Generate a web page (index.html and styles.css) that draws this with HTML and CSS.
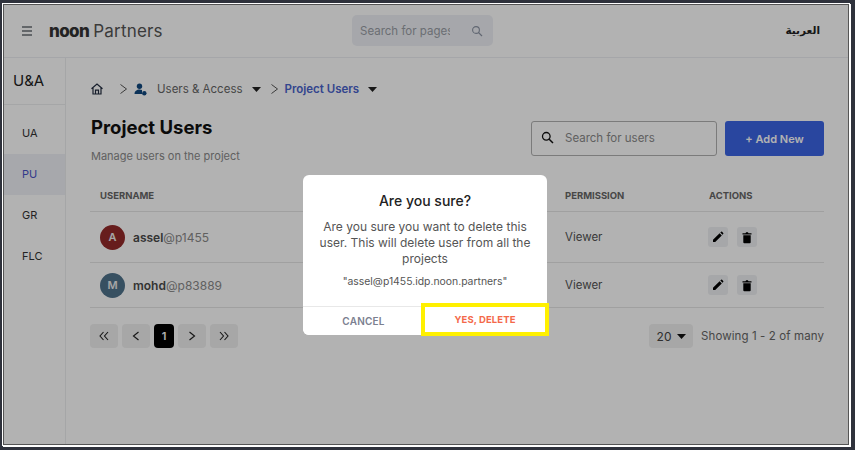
FILE: index.html
```html
<!DOCTYPE html>
<html lang="en">
<head>
<meta charset="utf-8">
<title>Project Users</title>
<link rel="stylesheet" href="styles.css">
</head>
<body>
<div class="frame">
  <header class="topbar">
    <svg class="menu" width="12" height="10" viewBox="0 0 12 10"><path d="M1 1h10M1 5h10M1 9h10" stroke="#6b6f75" stroke-width="1.3" fill="none"/></svg>
    <div class="brand"><b>noon</b> Partners</div>
    <div class="pagesearch"><span class="pagesearch-text">Search for pages</span>
      <svg width="12" height="12" viewBox="0 0 12 12"><circle cx="5" cy="5" r="3.4" stroke="#8b93a3" stroke-width="1.1" fill="none"/><path d="M7.6 7.6 11 11" stroke="#8b93a3" stroke-width="1.2"/></svg>
    </div>
    <div class="lang" lang="ar">العربية</div>
  </header>
  <div class="body">
    <aside class="side">
      <div class="side-title">U&amp;A</div>
      <nav class="side-nav">
        <a class="side-item">UA</a>
        <a class="side-item active">PU</a>
        <a class="side-item">GR</a>
        <a class="side-item">FLC</a>
      </nav>
    </aside>
    <main class="main">
      <div class="crumbs">
        <svg class="home" width="14" height="14" viewBox="0 0 14 14"><path d="M1.500 6.800 7 2l5.500 4.800M3 5.800V12h8V5.800M5.500 12V8.200h3V12" stroke="#222c3f" stroke-width="1.200" fill="none"/></svg>
        <svg class="chev first" width="9" height="12" viewBox="0 0 9 12"><path d="m1.500 1.500 6 4.500-6 4.500" stroke="#555" stroke-width="1" fill="none"/></svg>
        <svg class="usr" width="13" height="13" viewBox="0 0 13 13"><circle cx="5.500" cy="3.200" r="2.700" fill="#10487f"/><path d="M0.500 11c0-3 2.300-4.500 5-4.500 1 0 1.800.2 2.500.5v4z" fill="#10487f"/><circle cx="10.300" cy="10.300" r="2.200" fill="#10487f"/></svg>
        <span class="crumb-link">Users &amp; Access</span>
        <svg class="caret" width="9" height="5" viewBox="0 0 9 5"><path d="M0 0h9L4.500 5z" fill="#222"/></svg>
        <svg class="chev second" width="9" height="12" viewBox="0 0 9 12"><path d="m1.500 1.500 6 4.500-6 4.500" stroke="#555" stroke-width="1" fill="none"/></svg>
        <span class="crumb-cur">Project Users</span>
        <svg class="caret cur" width="9" height="5" viewBox="0 0 9 5"><path d="M0 0h9L4.500 5z" fill="#222"/></svg>
      </div>
      <div class="head">
        <div>
          <h1>Project Users</h1>
          <p class="sub">Manage users on the project</p>
        </div>
        <div class="tools">
          <div class="usersearch">
            <svg width="13" height="13" viewBox="0 0 13 13"><circle cx="5.300" cy="5.300" r="3.800" stroke="#111" stroke-width="1.300" fill="none"/><path d="M8.200 8.200 12 12" stroke="#111" stroke-width="1.500"/></svg>
            <span>Search for users</span>
          </div>
          <button class="add">+ Add New</button>
        </div>
      </div>
      <div class="table">
        <div class="row thead"><div>USERNAME</div><div>PERMISSION</div><div>ACTIONS</div></div>
        <div class="row r1">
          <div class="user"><span class="avatar red">A</span><span><b>assel</b>@p1455</span></div>
          <div class="perm">Viewer</div>
          <div class="acts">
            <span class="act"><svg width="12" height="12" viewBox="0 0 12 12"><path d="M1 11V8.800L7.600 2.200l2.200 2.200L3.200 11zM8.300 1.500l.8-.7a.7.7 0 0 1 1 0l1.100 1.100a.7.7 0 0 1 0 1l-.7.8z" fill="#000"/></svg></span>
            <span class="act"><svg width="12" height="13" viewBox="0 0 12 13"><path d="M1.500 2.200h3l.6-.9h1.800l.6.900h3v1.300h-9.000zM2.300 4.300h7.400v7a1 1 0 0 1-1 1H3.300a1 1 0 0 1-1-1z" fill="#000"/></svg></span>
          </div>
        </div>
        <div class="row r2">
          <div class="user"><span class="avatar blue">M</span><span><b>mohd</b>@p83889</span></div>
          <div class="perm">Viewer</div>
          <div class="acts">
            <span class="act"><svg width="12" height="12" viewBox="0 0 12 12"><path d="M1 11V8.800L7.600 2.200l2.200 2.200L3.200 11zM8.300 1.500l.8-.7a.7.7 0 0 1 1 0l1.100 1.100a.7.7 0 0 1 0 1l-.7.8z" fill="#000"/></svg></span>
            <span class="act"><svg width="12" height="13" viewBox="0 0 12 13"><path d="M1.500 2.200h3l.6-.9h1.800l.6.900h3v1.300h-9.000zM2.300 4.300h7.400v7a1 1 0 0 1-1 1H3.300a1 1 0 0 1-1-1z" fill="#000"/></svg></span>
          </div>
        </div>
      </div>
      <div class="pager">
        <div class="pages">
          <span class="pg"><svg width="10" height="10" viewBox="0 0 10 10"><path d="M4.500 1 1 5l3.500 4M9 1 5.500 5 9 9" stroke="#222" stroke-width="1.100" fill="none"/></svg></span>
          <span class="pg"><svg width="8" height="10" viewBox="0 0 8 10"><path d="M6.500 1 1.500 5l5 4" stroke="#222" stroke-width="1.200" fill="none"/></svg></span>
          <span class="pg now">1</span>
          <span class="pg"><svg width="8" height="10" viewBox="0 0 8 10"><path d="m1.500 1 5 4-5 4" stroke="#222" stroke-width="1.200" fill="none"/></svg></span>
          <span class="pg"><svg width="10" height="10" viewBox="0 0 10 10"><path d="M1 1l3.500 4L1 9M5.500 1 9 5 5.500 9" stroke="#222" stroke-width="1.100" fill="none"/></svg></span>
        </div>
        <div class="count">
          <span class="size">20 <svg width="9" height="5" viewBox="0 0 9 5"><path d="M0 0h9L4.500 5z" fill="#111"/></svg></span>
          <span class="showing">Showing 1 - 2 of many</span>
        </div>
      </div>
    </main>
  </div>
  <div class="overlay">
    <div class="modal">
      <h2>Are you sure?</h2>
      <p class="msg">Are you sure you want to delete this user. This will delete user from all the projects</p>
      <p class="mail">"assel@p1455.idp.noon.partners"</p>
      <div class="modal-btns">
        <button class="cancel">CANCEL</button>
        <button class="confirm">YES, DELETE</button>
      </div>
    </div>
  </div>
</div>
</body>
</html>
```
FILE: styles.css
```css
* { box-sizing: border-box; }
html, body { margin: 0; height: 100%; }
body {
  background: #2f323c;
  padding: 4px 0 0 3px;
  font-family: Inter, "Liberation Sans", sans-serif;
  overflow: hidden;
}
.frame {
  position: relative;
  width: 846px;
  height: 441px;
  background: #fff;
  border: 1px solid #555;
  box-shadow: 0 0 0 1px #fff, 1px 1px 0 1px #fff;
  display: flex;
  flex-direction: column;
}
.topbar {
  height: 53px;
  flex: none;
  display: flex;
  align-items: center;
  border-bottom: 1px solid #eceef3;
  padding: 0 0 1px 17px;
}
.menu { flex: none; }
.brand {
  margin-left: 16px;
  font-size: 17px;
  color: #555;
  letter-spacing: 0.2px;
  width: 303px;
  word-spacing: -1px;
}
.brand b { color: #333; font-weight: 800; letter-spacing: -0.6px; }
.pagesearch {
  width: 141px;
  height: 31px;
  background: #eef0f5;
  border-radius: 5px;
  display: flex;
  align-items: center;
  justify-content: space-between;
  padding: 0 10px 0 8px;
}
.pagesearch-text {
  width: 90px;
  overflow: hidden;
  white-space: nowrap;
  font-size: 11.500px;
  color: #9a9ea6;
}
.lang {
  margin: 0 28px 2px auto;
  font-family: "DejaVu Sans", sans-serif;
  font-size: 10.500px;
  font-weight: 700;
  color: #222;
}
.body { flex: 1; display: flex; min-height: 0; }
.side { width: 62px; flex: none; border-right: 1px solid #eceef0; }
.side-title {
  height: 47px;
  display: flex;
  align-items: center;
  padding: 0 0 2px 9px;
  font-size: 15px;
  color: #222;
  border-bottom: 1px solid #eceef0;
}
.side-nav { padding-top: 8px; display: flex; flex-direction: column; }
.side-item {
  height: 41px;
  display: flex;
  align-items: center;
  padding: 0 0 1px 18px;
  font-size: 11px;
  color: #333;
}
.side-item.active { background: #f0f1f6; color: #4a55c8; }
.main { flex: 1; min-width: 0; padding: 0 24px; }
.crumbs { height: 16px; margin-top: 23px; display: flex; align-items: center; }
.chev.first { margin-left: 15px; }
.usr { margin-left: 6px; }
.crumb-link { margin-left: 10px; font-size: 11.500px; color: #666; }
.caret { margin-left: 9px; }
.chev.second { margin-left: 9px; }
.crumb-cur { margin-left: 6px; font-size: 11.500px; font-weight: 600; color: #4a63cc; }
.caret.cur { margin-left: 9px; }
.head { display: flex; justify-content: space-between; margin-top: 8px; height: 77px; }
h1 { margin: 10px 0 0 1px; font-size: 18.500px; line-height: 24px; font-weight: 700; color: #111; }
.sub { margin: 10px 0 0 1px; font-size: 11px; line-height: 14px; color: #8a8a8a; }
.tools { display: flex; gap: 8px; margin-top: 16px; height: 35px; }
.usersearch {
  width: 186px;
  border: 1px solid #b0b0b0;
  border-radius: 3px;
  display: flex;
  align-items: center;
  gap: 11px;
  padding: 0 0 2px 9px;
  font-size: 11.500px;
  color: #8a8a8a;
}
.add {
  width: 99px;
  border: 0;
  border-radius: 3px;
  background: #3b65e4;
  color: #fff;
  font: 600 11px Inter, sans-serif;
}
.table { width: 734px; }
.row {
  display: grid;
  grid-template-columns: 465px 144px 1fr;
  align-items: center;
  padding-left: 10px;
  border-bottom: 1px solid #e6e6e6;
}
.thead { height: 30px; font-size: 9.500px; font-weight: 700; color: #666; padding-bottom: 2px; }
.r1 { height: 51px; }
.r2 { height: 45px; }
.user { display: flex; align-items: center; gap: 8px; font-size: 12px; color: #8a8a8a; }
.user b { color: #4a4a4a; font-weight: 600; }
.avatar {
  width: 25px;
  height: 25px;
  border-radius: 50%;
  display: flex;
  align-items: center;
  justify-content: center;
  color: #eee;
  font-size: 11px;
  font-weight: 600;
}
.avatar.red { background: #942a2a; }
.avatar.blue { background: #50738c; }
.perm { font-size: 11.500px; color: #555; }
.acts { display: flex; gap: 9px; margin-left: -1px; }
.act {
  width: 20px;
  height: 20px;
  border-radius: 3px;
  background: #eef0f3;
  display: flex;
  align-items: center;
  justify-content: center;
}
.pager { display: flex; justify-content: space-between; margin-top: 16px; width: 734px; }
.pages { display: flex; gap: 4px; }
.pg {
  width: 28px;
  height: 24px;
  border-radius: 4px;
  background: #f0f0f0;
  display: flex;
  align-items: center;
  justify-content: center;
}
.pg.now { width: 20px; background: #000; color: #fff; font-size: 11px; font-weight: 600; }
.count { display: flex; align-items: center; gap: 8px; }
.size {
  width: 44px;
  height: 24px;
  border-radius: 4px;
  background: #f0f0f0;
  display: flex;
  align-items: center;
  justify-content: center;
  gap: 5px;
  font-size: 12px;
  color: #444;
}
.showing { font-size: 11.500px; color: #666; letter-spacing: 0.1px; }
.overlay {
  position: absolute;
  inset: 0;
  background: rgba(0, 0, 0, 0.3);
  display: flex;
  justify-content: center;
  padding-top: 170px;
  padding-right: 2px;
}
.modal {
  width: 244px;
  height: 160px;
  background: #fff;
  border-radius: 6px;
  display: flex;
  flex-direction: column;
  align-items: center;
}
h2 { margin: 17px 0 0; font-size: 14px; line-height: 18px; font-weight: 500; color: #222; }
.msg {
  margin: 9px 0 0;
  padding: 0 10px;
  text-align: center;
  font-size: 12px;
  line-height: 16px;
  color: #555;
}
.mail { margin: 8px 0 0; font-size: 10.400px; line-height: 14px; color: #555; white-space: nowrap; }
.modal-btns {
  margin-top: auto;
  width: 100%;
  height: 29px;
  display: flex;
  border-top: 1px solid #e8e8e8;
}
.modal-btns button { border: 0; background: #fff; font: 600 10px Inter, sans-serif; letter-spacing: 0.2px; padding: 0; }
.cancel { width: 121px; color: #7b8090; border-radius: 0 0 0 6px; }
.modal-btns .confirm {
  flex: 1;
  margin: 0 2px 3px 1px;
  font-size: 9.500px;
  font-weight: 700;
  letter-spacing: 0.1px;
  color: #f4694a;
  outline: 4px solid #fff000;
}
```
